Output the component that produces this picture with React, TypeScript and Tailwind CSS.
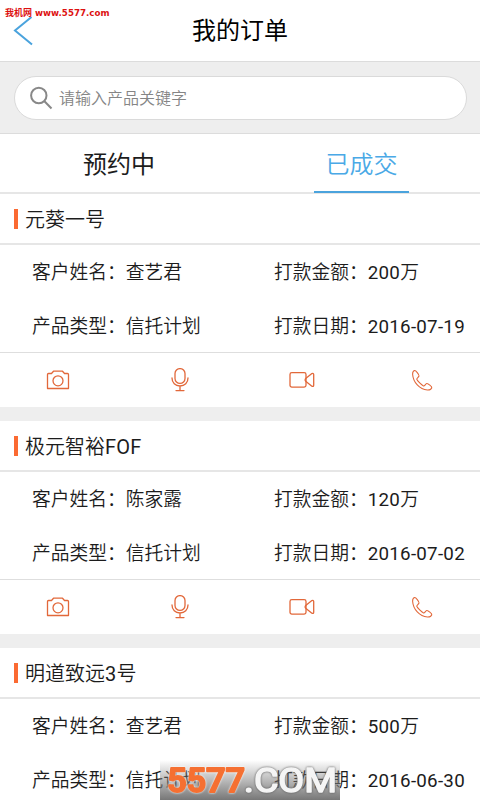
const orders = [
  { title: "元葵一号", customer: "查艺君", type: "信托计划", amount: "200万", date: "2016-07-19" },
  { title: "极元智裕FOF", customer: "陈家露", type: "信托计划", amount: "120万", date: "2016-07-02" },
  { title: "明道致远3号", customer: "查艺君", type: "信托计划", amount: "500万", date: "2016-06-30" },
];

type Order = (typeof orders)[number];

const iconProps = {
  fill: "none",
  stroke: "#e2683a",
  strokeWidth: 1.3,
  strokeLinejoin: "round" as const,
  strokeLinecap: "round" as const,
};

const CameraIcon = () => (
  <svg width="24" height="24" viewBox="0 0 24 24" {...iconProps}>
    <path d="M1.5 20.5V6.5Q1.5 5.5 2.5 5.5H5.5L7.5 3.2H16.5L18.5 5.5H21.5Q22.5 5.5 22.5 6.5V20.5Z" />
    <circle cx="12" cy="12.8" r="5" />
  </svg>
);

const MicIcon = () => (
  <svg width="24" height="24" viewBox="0 0 24 24" {...iconProps}>
    <rect x="7" y="0.6" width="10" height="14.8" rx="5" />
    <path d="M4 10C4 14.8 7.3 18 12 18S20 14.8 20 10M12 18V22.6M8 22.6H16" />
  </svg>
);

const VideoIcon = () => (
  <svg width="26" height="24" viewBox="0 0 26 24" {...iconProps}>
    <rect x="1" y="4.7" width="16" height="14.4" rx="1.8" />
    <path d="M17 10.2L22.9 5.6Q24.7 4.8 24.7 6.6V17.2Q24.7 19 22.9 18.2L17 13.6Q15.2 11.9 17 10.2Z" />
  </svg>
);

const PhoneIcon = () => (
  <svg width="24" height="24" viewBox="0 0 24 24" {...iconProps} strokeWidth={1.1}>
    <path d="M4.5 2.6C3.3 3 2.6 4.3 2.6 6.2C3.2 14.5 9.5 21.2 17.5 22C19.5 22.1 21.3 21.1 21.8 19.8C22.1 18.7 17.9 15.2 16.8 15.5C15.4 15.9 14.7 18.3 13.5 17.9C11.5 17 7.6 13.1 6.8 11.2C6.5 10 8.8 9.3 9 7.9C9.1 6.5 5.8 2.2 4.5 2.6Z" />
  </svg>
);

// Latin letters and digits are set one step heavier than the Chinese text
const MixedText = ({ text }: { text: string }) => (
  <>
    {text.split(/([A-Z\d-]+)/).map((part, index) =>
      index % 2 ? (
        <span key={index} className="font-normal tracking-[0.25px]">
          {part}
        </span>
      ) : (
        part
      )
    )}
  </>
);

const Field = ({ label, value }: { label: string; value: string }) => (
  <div className="flex h-[54px] items-center pt-0.5 whitespace-nowrap">
    <span>{label}：</span>
    <span>
      <MixedText text={value} />
    </span>
  </div>
);

const OrderCard = ({ order }: { order: Order }) => (
  <section className="bg-white">
    <h2 className="flex h-[51px] items-center border-b-2 border-[#e6e6e6] pl-3.5 text-xl font-[350]">
      <span className="mr-[7px] h-5 w-1 bg-[#fb6a32]" />
      <span className="pt-0.5">
        <MixedText text={order.title} />
      </span>
    </h2>
    <div className="grid h-[108px] grid-cols-[242px_1fr] border-b border-[#dedede] pl-8 text-[18.75px]">
      <Field label="客户姓名" value={order.customer} />
      <Field label="打款金额" value={order.amount} />
      <Field label="产品类型" value={order.type} />
      <Field label="打款日期" value={order.date} />
    </div>
    <div className="grid h-[54px] grid-cols-[116px_127px_117px_124px] items-center justify-items-center">
      <CameraIcon />
      <MicIcon />
      <VideoIcon />
      <PhoneIcon />
    </div>
  </section>
);

export default function App() {
  return (
    <div className="relative flex h-[800px] w-[480px] flex-col overflow-hidden bg-[#eeeeee] font-['Roboto','Noto_Sans_CJK_SC',sans-serif] font-[350] text-[#1c1c1c]">
      <header className="grid h-[62px] shrink-0 grid-cols-3 items-center border-b border-[#dcdcdc] bg-white">
        <svg width="22" height="30" viewBox="0 0 22 30" className="ml-3" fill="none" stroke="#4aa3dd" strokeWidth="2">
          <path d="M19.5 1L3 14.5L20 28.5" />
        </svg>
        <h1 className="text-center text-2xl font-normal text-black">我的订单</h1>
      </header>

      <div className="h-[72px] shrink-0 border-b border-[#dcdcdc] pt-3.5 pl-3.5">
        <div className="flex h-11 w-[453px] items-center rounded-full border border-[#dadada] bg-white pl-3.5 text-base text-[#858585]">
          <svg width="25" height="25" viewBox="0 0 25 25" className="mr-[5px]" fill="none" stroke="#888888" strokeWidth="2">
            <circle cx="9.8" cy="9.5" r="7.7" />
            <path d="M15.2 15L22.5 22.5" />
          </svg>
          <span className="pt-0.5">请输入产品关键字</span>
        </div>
      </div>

      <nav className="flex h-[60px] shrink-0 border-b-2 border-[#e6e6e6] bg-white text-2xl">
        <div className="flex w-[238px] items-center justify-center pt-1 font-normal">预约中</div>
        <div className="ml-[76px] flex h-[59px] w-[95px] items-center justify-center border-b-2 border-[#4aa3dd] pt-[5px] text-[#4aa9e6]">
          已成交
        </div>
      </nav>

      <main className="flex flex-col gap-3.5">
        {orders.map((order) => (
          <OrderCard key={order.title} order={order} />
        ))}
      </main>

      <div className="absolute top-[7px] left-[5px] flex items-center font-bold whitespace-nowrap text-[#dd1111]">
        <span className="text-[9px] leading-3">我机网</span>
        <span className="ml-[3px] font-['DejaVu_Sans'] text-[8.7px] leading-3">www.5577.com</span>
      </div>

      <div className="absolute top-[760px] left-40 h-10 w-[180px] bg-linear-to-b from-transparent to-[#777777]">
        <svg
          width="180"
          height="40"
          viewBox="0 0 180 40"
          fontFamily="Roboto"
          fontSize="34"
          strokeLinejoin="round"
          strokeLinecap="round"
          className="overflow-visible"
        >
          <g className="drop-shadow-[0_0_1px_#ffffff]">
            <text x="7" y="32" textLength="78" lengthAdjust="spacingAndGlyphs" fontWeight="500" fill="#f57032" stroke="#f57032" strokeWidth="2">5577</text>
          </g>
          <g className="drop-shadow-[0_0_1px_#555555]">
            <text x="84" y="32" textLength="93" lengthAdjust="spacingAndGlyphs" fontWeight="400" fill="#f5f5f5" stroke="#f5f5f5" strokeWidth="1.6">.COM</text>
          </g>
        </svg>
      </div>
    </div>
  );
}
